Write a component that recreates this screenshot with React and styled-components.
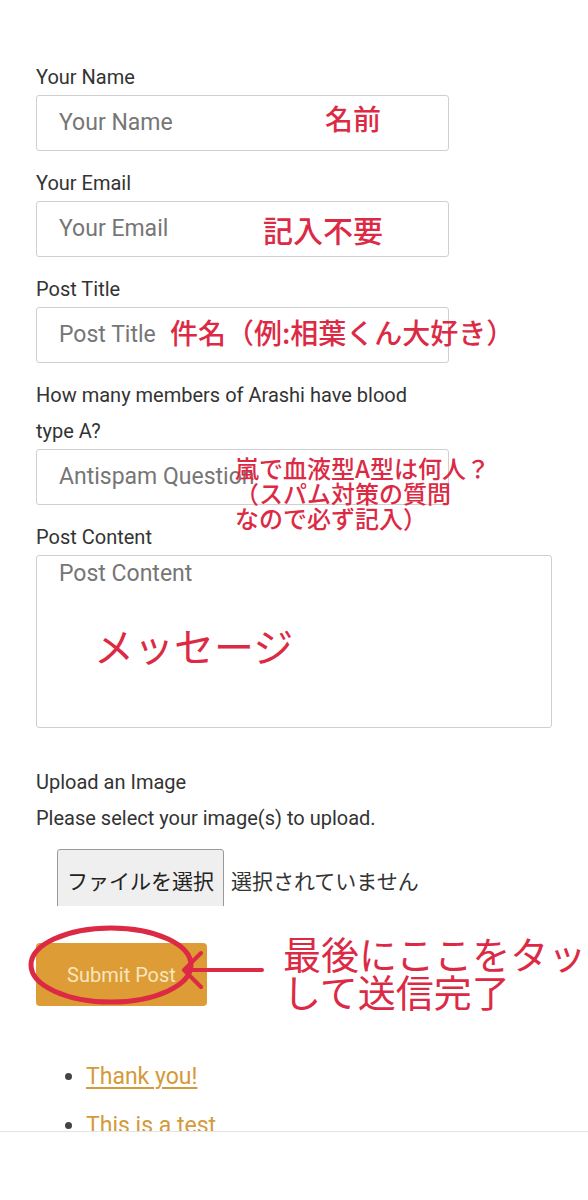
import React from 'react'
import styled, { createGlobalStyle } from 'styled-components'

const GlobalStyle = createGlobalStyle`
  body {
    margin: 0;
    background: #fff;
    font-family: Roboto, "Noto Sans CJK JP", sans-serif;
    color: #333;
  }
`

const Page = styled.div`
  width: 588px;
  height: 1200px;
  overflow: hidden;
  position: relative;
  padding: 59px 0 0 36px;
  box-sizing: border-box;
`

const Field = styled.div`
  margin-bottom: ${p => p.$gap ?? 14}px;
`

const Label = styled.label`
  display: block;
  font-size: 20px;
  line-height: 36px;
  color: #333;
  width: ${p => p.$width || 'auto'};
`

const InputWrap = styled.div`
  position: relative;
  width: ${p => p.$width || 413}px;
`

const TextInput = styled.div`
  box-sizing: border-box;
  height: ${p => p.$height || 56}px;
  border: 1px solid #cfcfcf;
  border-radius: 3px;
  padding: ${p => (p.$area ? '5px 22px' : '0 22px')};
  display: flex;
  align-items: ${p => (p.$area ? 'flex-start' : 'center')};
  font-size: 23px;
  line-height: 26px;
  color: #767676;
  background: #fff;
`

const Note = styled.div`
  position: absolute;
  left: ${p => p.$left}px;
  top: ${p => p.$top}px;
  font-family: "Noto Sans CJK JP", sans-serif;
  font-size: ${p => p.$size}px;
  line-height: ${p => p.$lh || 1.2};
  font-weight: ${p => p.$weight || 500};
  color: #dc2a45;
  white-space: nowrap;
  pointer-events: none;
`

const UploadBlock = styled.div`
  margin-top: 36px;
`

const Help = styled.p`
  margin: 0;
  font-size: 20px;
  line-height: 36px;
  color: #333;
`

const FileRow = styled.div`
  margin: 13px 0 0 21px;
  height: 57px;
  overflow: hidden;
  display: flex;
  align-items: flex-start;
  gap: 7px;
`

const FileButton = styled.div`
  box-sizing: border-box;
  height: 66px;
  padding: 17px 9px 0;
  background: #efefef;
  border: 1px solid #9a9a9a;
  border-radius: 3px;
  font-family: "Noto Sans CJK JP", sans-serif;
  font-size: 21px;
  line-height: 26px;
  color: #222;
`

const FileText = styled.span`
  padding-top: 18px;
  font-family: "Noto Sans CJK JP", sans-serif;
  font-size: 21px;
  line-height: 26px;
  color: #333;
`

const SubmitArea = styled.div`
  position: relative;
  margin-top: 37px;
  height: 63px;
`

const SubmitButton = styled.div`
  width: 171px;
  height: 63px;
  background: #dd9c36;
  border-radius: 4px;
  display: flex;
  align-items: center;
  justify-content: center;
  font-size: 20px;
  color: #f8e6bf;
`

const Marks = styled.svg`
  position: absolute;
  left: -36px;
  top: -30px;
  overflow: visible;
`

const List = styled.ul`
  margin: 58px 0 0;
  padding-left: 50px;
  font-size: 23px;
  line-height: 26px;
  color: #444;
  li { margin-bottom: 23px; }
`

const Link = styled.a`
  color: #d49a3a;
  text-decoration: ${p => (p.$under ? 'underline' : 'none')};
  text-underline-offset: 3px;
`

const BottomBar = styled.div`
  position: absolute;
  left: 0;
  right: 0;
  top: 1131px;
  bottom: 0;
  background: #fff;
  border-top: 1px solid #e3e3e3;
`

export default function App() {
  return (
    <>
      <GlobalStyle />
      <Page>
        <Field>
          <Label>Your Name</Label>
          <InputWrap>
            <TextInput>Your Name</TextInput>
            <Note $left={289} $top={7} $size={28}>名前</Note>
          </InputWrap>
        </Field>
        <Field>
          <Label>Your Email</Label>
          <InputWrap>
            <TextInput>Your Email</TextInput>
            <Note $left={227} $top={10} $size={30}>記入不要</Note>
          </InputWrap>
        </Field>
        <Field>
          <Label>Post Title</Label>
          <InputWrap>
            <TextInput>Post Title</TextInput>
            <Note $left={134} $top={9} $size={28}>件名（例:相葉くん大好き）</Note>
          </InputWrap>
        </Field>
        <Field>
          <Label $width="395px">How many members of Arashi have blood type A?</Label>
          <InputWrap>
            <TextInput>Antispam Question</TextInput>
            <Note $left={199} $top={7} $size={24} $lh={1.04}>
              嵐で血液型A型は何人？<br />（スパム対策の質問<br />なので必ず記入）
            </Note>
          </InputWrap>
        </Field>
        <Field $gap={0}>
          <Label>Post Content</Label>
          <InputWrap $width={516}>
            <TextInput $area $height={173}>Post Content</TextInput>
            <Note $left={58} $top={66} $size={40} $weight={400}>メッセージ</Note>
          </InputWrap>
        </Field>
        <UploadBlock>
          <Help>Upload an Image</Help>
          <Help>Please select your image(s) to upload.</Help>
          <FileRow>
            <FileButton>ファイルを選択</FileButton>
            <FileText>選択されていません</FileText>
          </FileRow>
        </UploadBlock>
        <SubmitArea>
          <SubmitButton>Submit Post</SubmitButton>
          <Marks width="588" height="120" viewBox="0 0 588 120">
            <ellipse cx="111" cy="52" rx="80" ry="37" fill="none" stroke="#dc2a45" strokeWidth="5" />
            <path d="M262 57 L184 57 M201 40 L184 57 L201 74" fill="none" stroke="#dc2a45" strokeWidth="4" strokeLinecap="round" strokeLinejoin="round" />
          </Marks>
          <Note $left={247} $top={-9} $size={38} $lh={1.0} $weight={400}>
            最後にここをタッチ<br />して送信完了
          </Note>
        </SubmitArea>
        <List>
          <li><Link $under href="#">Thank you!</Link></li>
          <li><Link href="#">This is a test</Link></li>
        </List>
        <BottomBar />
      </Page>
    </>
  )
}
